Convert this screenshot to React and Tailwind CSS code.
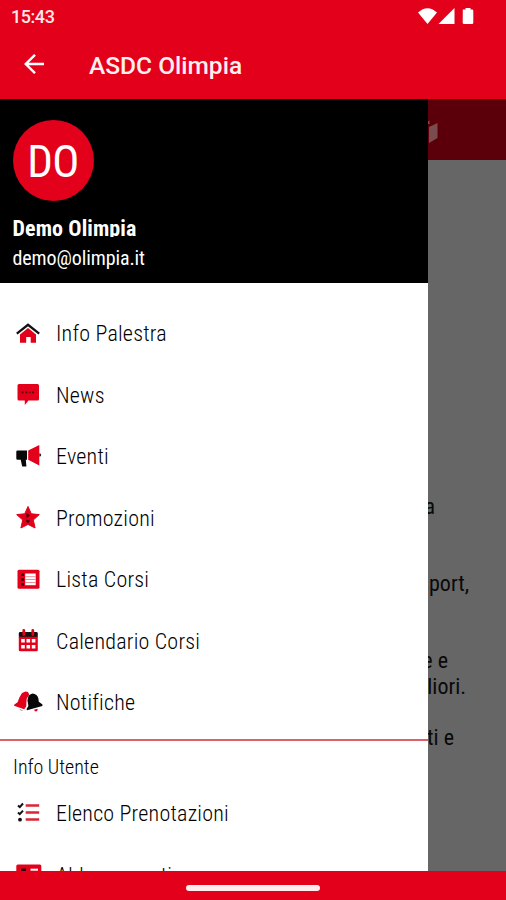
const RED = '#e3001b';

function HomeIcon() {
  return (
    <svg viewBox="0 0 28 28" className="size-7">
      <path d="M6 14.500 14 8l8 6.500V22.800h-5.300V17h-4.500v5.800H6z" fill={RED} />
      <path d="M2.800 13.700 14 4.800l11.200 8.900" fill="none" stroke="#111" strokeWidth="2.300" />
    </svg>
  );
}

function NewsIcon() {
  return (
    <svg viewBox="0 0 28 28" className="size-7">
      <path d="M5 3h18.500q1.500 0 1.500 1.500v13.500q0 1.500-1.500 1.500h-9L10.800 24v-4.500H5q-1.500 0-1.500-1.500V4.500Q3.500 3 5 3z" fill={RED} />
      <path d="M7.500 11.300h2.200m1.700 0h2.100m1.500 0h1.700m1.400 0h2" stroke="#5a0712" strokeWidth="1.700" />
    </svg>
  );
}

function HornIcon() {
  return (
    <svg viewBox="0 0 28 28" className="size-7">
      <path d="M3.500 7.500H13v9.300h-1.200l.6 6.600H8.200l-1.500-6.600H3.500q-1.200 0-1.200-1.200V8.700q0-1.200 1.200-1.200z" fill="#080808" />
      <path d="M14.200 7.500 25.300 2v20.400l-11.100-5.600z" fill={RED} />
      <path d="M25.300 10.300q1.900 0 1.900 1.700t-1.900 1.700z" fill="#222" />
    </svg>
  );
}

function StarIcon() {
  return (
    <svg viewBox="0 0 28 28" className="size-7">
      <path d="m14 2.500 3.300 7.300 8 .8-6 5.400 1.800 8L14 20.400 6.900 24l1.800-8-6-5.400 8-.8z" fill={RED} stroke={RED} strokeWidth="1" strokeLinejoin="round" />
      <path d="m12.500 9 3.500 2.500-3.500 2.500zM12.300 15.500l3.700 1.200-1.700 2.300-2-.7z" fill="#3a0710" />
    </svg>
  );
}

function ListIcon() {
  return (
    <svg viewBox="0 0 28 28" className="size-7">
      <rect x="3.500" y="3.800" width="22" height="19" rx="1.500" fill={RED} />
      <rect x="11.200" y="7.500" width="10.500" height="11.700" fill="#fff" />
      <path d="M11.200 10.700h10.500M11.200 13.500h10.500M11.200 16.500h10.500" stroke="#ef7180" strokeWidth=".8" />
      <path d="M8.600 7.500v12" stroke="#32070e" strokeWidth="2.800" strokeDasharray="2.600 2.100" />
    </svg>
  );
}

function CalendarIcon() {
  return (
    <svg viewBox="0 0 28 28" className="size-7">
      <rect x="4.800" y="9" width="19" height="15.300" rx="1.300" fill={RED} />
      <path d="M4.800 9.800V6.500q0-1.400 1.400-1.400h16.200q1.400 0 1.400 1.400v3.300z" fill="#111" />
      <path d="M9.800 3.500v4M18.800 3.500v4" stroke={RED} strokeWidth="2.800" strokeLinecap="round" />
      <path d="M7.200 12h3.600v3.600H7.200zm5.300 0h3.600v3.600h-3.600zm5.300 0h3.600v3.600h-3.600zM7.200 18h3.600v3.600H7.200zm5.300 0h3.600v3.600h-3.600zm5.300 0h3.600v3.600h-3.600z" fill="#fff" />
    </svg>
  );
}

function BellsIcon() {
  return (
    <svg viewBox="0 0 28 28" className="size-7 overflow-visible">
      <path d="m8 4 3.500-1.500 2.500.6 1.200 2.400-2.600 4.500-.4 7.500-2 2.800L0 16.800l.4-1.400 3.200-2.200 1.800-4.700z" fill={RED} />
      <path d="M5.500 19.800q.7 2.500 3.700 1.900z" fill="#777" />
      <path d="m14.700 6.200 3.700-1.800q5 .2 6 5.100l.4 3.300 3.700 2.700-.2 1.500L13 21.300l-.5-1.300 1.900-3-1-5.800z" fill="#080808" />
      <path d="m20 20.700 3.600-.9q.2 2.700-1.700 2.700-1.400 0-1.900-1.800z" fill={RED} />
    </svg>
  );
}

function ChecklistIcon() {
  return (
    <svg viewBox="0 0 28 28" className="size-7">
      <path d="M11.700 5.500h13.500M11.700 12.600h13.500M11.700 19.600h13.500" stroke="#dc2637" strokeWidth="2.500" />
      <path d="m4 5.500 1.800 1.600L9 3.500M4 12.500l1.800 1.700L9 10.700" fill="none" stroke="#111" strokeWidth="2" />
      <circle cx="6" cy="19.700" r="1.900" fill="#111" />
    </svg>
  );
}

function CardIcon() {
  return (
    <svg viewBox="0 0 28 28" className="size-7">
      <rect x="2.300" y="3.400" width="25" height="20" rx="1.500" fill={RED} />
      <path d="M7 7.500h5v5H7z" fill="#26060b" />
      <path d="M16.500 8.700h7.500" stroke="#fff" strokeWidth="2" />
    </svg>
  );
}

const items = [
  ['Info Palestra', HomeIcon],
  ['News', NewsIcon],
  ['Eventi', HornIcon],
  ['Promozioni', StarIcon],
  ['Lista Corsi', ListIcon],
  ['Calendario Corsi', CalendarIcon],
  ['Notifiche', BellsIcon],
];

function MenuRow({ label, Icon }) {
  return (
    <li className="flex h-[61.5px] shrink-0 items-center gap-[14px] pl-[14px]">
      <Icon />
      <span className="whitespace-nowrap text-[22px] font-[330] tracking-[0.220px] text-black">{label}</span>
    </li>
  );
}

function StatusBar() {
  return (
    <div className="flex h-8 items-center justify-between pl-[11px] pr-8">
      <span className="font-[Roboto] text-[18px] font-medium tracking-[-0.450px] text-[#ffe9ea]">15:43</span>
      <svg viewBox="0 0 56 18" className="h-[18px] w-14 fill-white">
        <path d="M0 5.500Q9.500-3 19 5.500L9.500 17z" />
        <path d="M36.500 1v16h-16z" />
        <path d="M44.800 2.500h2.700V1h5v1.500h1.500q1.300 0 1.300 1.300v12q0 1.200-1.300 1.200h-8q-1.300 0-1.300-1.200z" />
      </svg>
    </div>
  );
}

function Line({ text, className }) {
  return <p className={`flex h-[25.700px] shrink-0 items-center justify-end whitespace-nowrap ${className}`}>{text}</p>;
}

export default function App() {
  return (
    <div className="flex h-[900px] w-[506px] flex-col overflow-hidden bg-white font-['Roboto_Condensed',Roboto,sans-serif] [font-stretch:75%]">
      <header className="h-[99px] shrink-0 bg-[#e3001b] [font-stretch:100%]">
        <StatusBar />
        <div className="flex h-[67px] items-center pl-6">
          <svg viewBox="0 0 20 20" className="mb-[3px] size-5 fill-none stroke-white stroke-[2.400]">
            <path d="M20 10H2M11 .8 1.700 10l9.300 9.200" />
          </svg>
          <h1 className="pl-[45px] pt-px font-[Roboto] text-[24.500px] font-medium text-[#fff0f0]">ASDC Olimpia</h1>
        </div>
      </header>
      <main className="flex min-h-0 flex-1">
        <aside className="flex w-[428px] shrink-0 flex-col overflow-hidden bg-white">
          <div className="flex h-[184px] shrink-0 flex-col bg-black pl-[12.500px] pt-[21px] text-white">
            <div className="flex size-[81px] shrink-0 items-center justify-center rounded-full bg-[#e3001b] pt-[2px] text-[45px] tracking-[-0.500px]">DO</div>
            <div className="mt-[14px] h-[22px] overflow-hidden text-[22px] leading-[28px] font-bold tracking-[0.1px]">Demo Olimpia</div>
            <div className="mt-[7px] text-[20px] leading-[28px] tracking-[-0.1px]">demo@olimpia.it</div>
          </div>
          <ul className="flex flex-col pt-5">
            {items.map(([label, Icon]) => (
              <MenuRow key={label} label={label} Icon={Icon} />
            ))}
          </ul>
          <div className="mt-[5.500px] h-[2px] shrink-0 bg-[#dc6067]" />
          <h2 className="flex h-[42px] shrink-0 items-center pl-[13px] pt-[9px] text-[20px] font-[330] text-black">Info Utente</h2>
          <ul className="flex flex-col">
            <MenuRow label="Elenco Prenotazioni" Icon={ChecklistIcon} />
            <MenuRow label="Abbonamenti" Icon={CardIcon} />
          </ul>
        </aside>
        <section className="flex min-w-0 flex-1 flex-col overflow-hidden bg-[#666] text-[22px] text-[#090909]">
          <div className="h-[61px] shrink-0 bg-[#5b000b]">
            <svg viewBox="0 0 12 61" className="h-[61px] w-3 fill-[#7b4c4e]">
              <path d="m1 28 8.500-4v15L1 44zM0 22.500l1.500-1V25H0z" />
            </svg>
          </div>
          <div className="flex flex-col pt-[334px]">
            <Line text="a" className="pr-[71px]" />
            <Line text="sport," className="mt-[51.300px] pr-[37px]" />
            <Line text="e e" className="mt-[51.300px] pr-[58px]" />
            <Line text="migliori." className="pr-10" />
            <Line text="ti e" className="mt-[25.700px] pr-[52px]" />
          </div>
        </section>
      </main>
      <footer className="flex h-[29px] shrink-0 items-center justify-center bg-[#e3001b] pt-[5px]">
        <div className="h-[6px] w-[134px] rounded-full bg-[#ffecef]" />
      </footer>
    </div>
  );
}
